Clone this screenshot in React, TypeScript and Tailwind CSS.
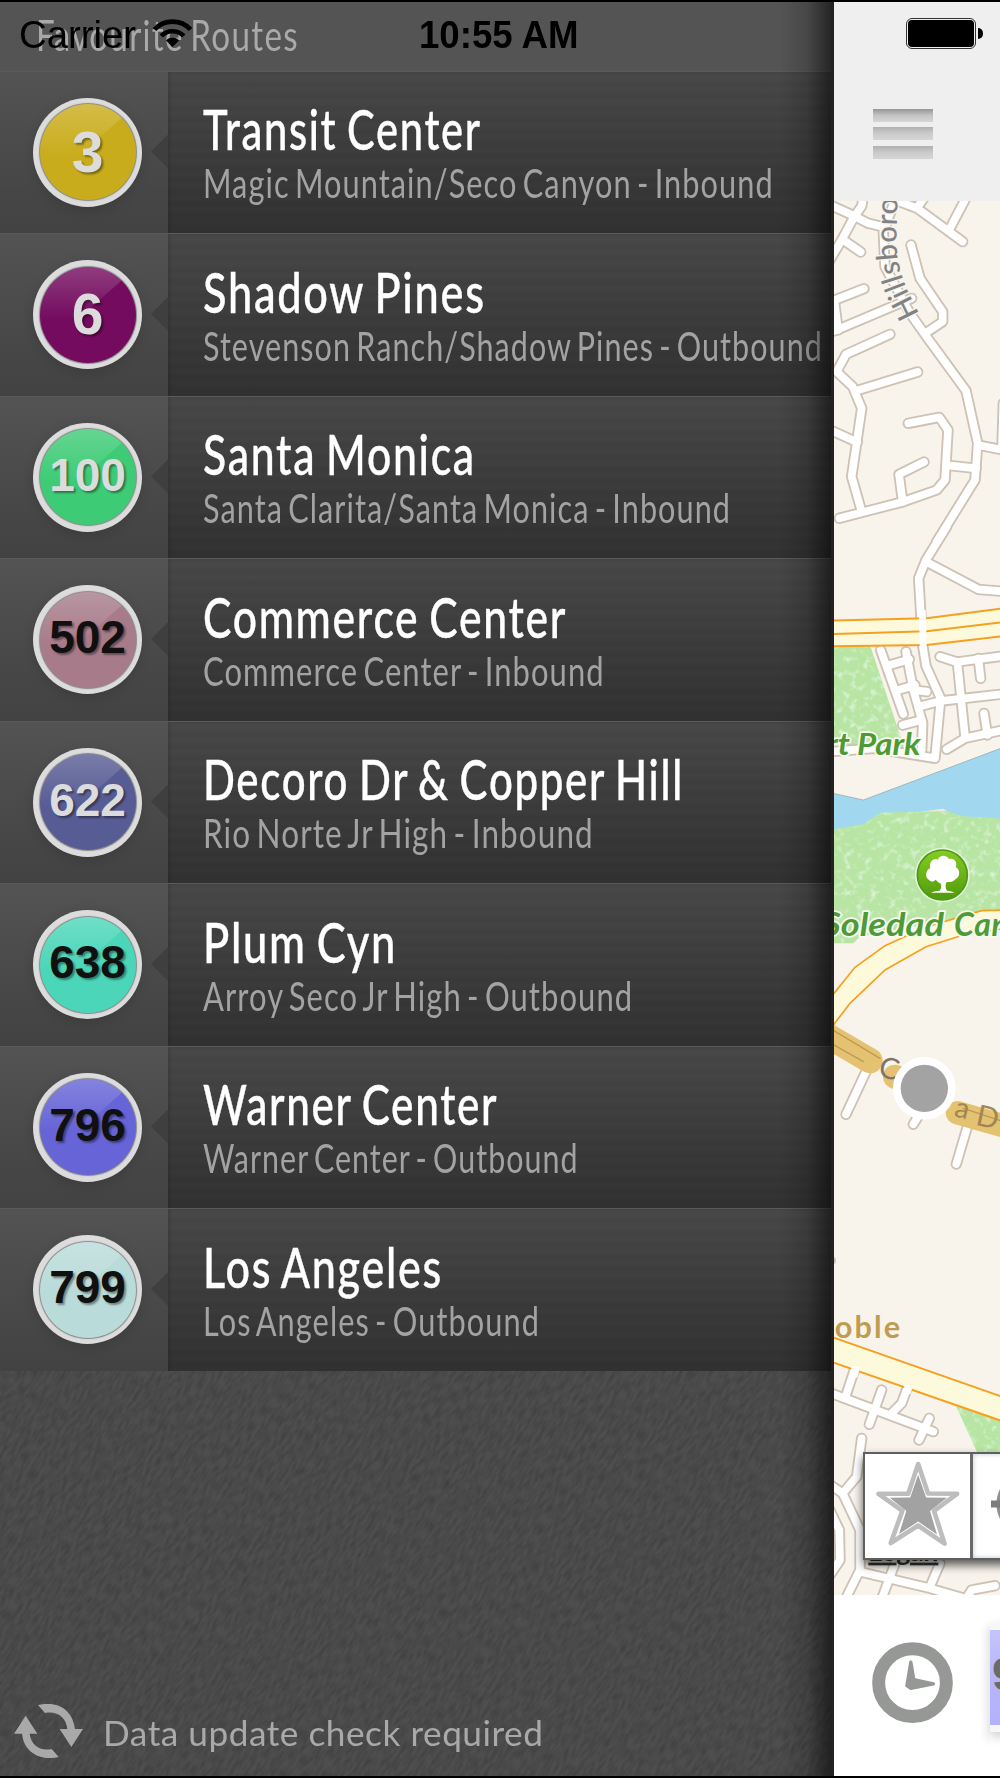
import { useLayoutEffect, useRef, useState } from "react";

type Route = {
  number: string;
  color: string;
  dark?: boolean;
  title: string;
  titleWidth: number;
  detail: string;
  detailWidth: number;
};

const routes: Route[] = [
  { number: "3", color: "#c9ac1b", title: "Transit Center", titleWidth: 279, detail: "Magic Mountain/Seco Canyon - Inbound", detailWidth: 571 },
  { number: "6", color: "#740b5f", title: "Shadow Pines", titleWidth: 283, detail: "Stevenson Ranch/Shadow Pines - Outbound", detailWidth: 620 },
  { number: "100", color: "#3ecb76", title: "Santa Monica", titleWidth: 273, detail: "Santa Clarita/Santa Monica - Inbound", detailWidth: 528 },
  { number: "502", color: "#a87b8b", dark: true, title: "Commerce Center", titleWidth: 364, detail: "Commerce Center - Inbound", detailWidth: 402 },
  { number: "622", color: "#585c94", title: "Decoro Dr & Copper Hill", titleWidth: 481, detail: "Rio Norte Jr High - Inbound", detailWidth: 391 },
  { number: "638", color: "#4bd6ba", dark: true, title: "Plum Cyn", titleWidth: 194, detail: "Arroy Seco Jr High - Outbound", detailWidth: 430 },
  { number: "796", color: "#6664d6", dark: true, title: "Warner Center", titleWidth: 295, detail: "Warner Center - Outbound", detailWidth: 376 },
  { number: "799", color: "#b9dbd9", dark: true, title: "Los Angeles", titleWidth: 240, detail: "Los Angeles - Outbound", detailWidth: 337 },
];

// Condenses a line of text so that it takes exactly `width` pixels
function FitText({ text, width, className }: { text: string; width: number; className: string }) {
  const ref = useRef<HTMLSpanElement>(null);
  const [scale, setScale] = useState(1);

  useLayoutEffect(() => {
    if (ref.current) setScale(width / ref.current.offsetWidth);
  }, [text, width]);

  return (
    <div className={className} style={{ width }}>
      <span ref={ref} className="inline-block origin-left whitespace-nowrap" style={{ transform: `scaleX(${scale})` }}>
        {text}
      </span>
    </div>
  );
}

function Badge({ route }: { route: Route }) {
  return (
    <div className="mt-[26px] ml-[33px] h-[109px] w-[109px] rounded-full bg-[#dcdcdc] p-[6.5px] shadow-[0_3px_12px_rgba(0,0,0,0.14)]">
      <div
        className="relative flex h-full w-full items-center justify-center overflow-hidden rounded-full shadow-[0_0_1px_1px_rgba(70,70,70,0.55)]"
        style={{ backgroundColor: route.color }}
      >
        <div className="absolute inset-0 bg-linear-to-b from-white/20 to-white/0 to-55% [clip-path:polygon(0_0,100%_0,84%_16%,34%_60%,0_78%)]" />
        <span
          className={
            "relative font-['Liberation_Sans',sans-serif] font-bold [text-shadow:2px_2px_2px_rgba(0,0,0,0.4)] " +
            (route.number.length === 1 ? "text-[57px] leading-[57px] " : "-mt-[5px] text-[46px] leading-[46px] ") +
            (route.dark ? "text-[#101010]" : "text-[#dcdcdc]")
          }
        >
          {route.number}
        </span>
      </div>
    </div>
  );
}

function RouteRow({ route }: { route: Route }) {
  return (
    <li className="flex h-[162.5px] border-t border-[#5a5a5a] bg-linear-to-b from-[#494949] to-[#323232]">
      <div className="relative w-[168px] bg-linear-to-b from-[#535353] to-[#424242]">
        <Badge route={route} />
        <div className="absolute top-[63px] right-0 h-[34px] w-[17px] bg-[#3f3f3f] [clip-path:polygon(100%_0,100%_100%,0_50%)]" />
      </div>
      <div className="flex flex-1 flex-col gap-[6px] bg-[repeating-linear-gradient(to_bottom,rgba(0,0,0,0.05)_0px,transparent_6px,rgba(0,0,0,0.05)_12px)] pt-[29.5px] pl-[35px] shadow-[inset_3px_0_3px_-1px_rgba(0,0,0,0.12)]">
        <FitText
          text={route.title}
          width={route.titleWidth}
          className="text-[56px] leading-[56px] font-medium tracking-[0.04em] text-white [-webkit-text-stroke:0.4px_white] [word-spacing:-0.06em]"
        />
        <FitText
          text={route.detail}
          width={route.detailWidth}
          className="text-[40px] leading-[40px] tracking-[0.035em] text-[#a3a3a3] [word-spacing:-0.12em]"
        />
      </div>
    </li>
  );
}

function Leather() {
  return (
    <svg className="absolute inset-0 h-full w-full" aria-hidden="true">
      <filter id="grain" x="0" y="0" width="100%" height="100%">
        <feTurbulence type="fractalNoise" baseFrequency="0.09 0.3" numOctaves="2" seed="4" />
        <feColorMatrix values="0 0 0 0 0  0 0 0 0 0  0 0 0 0 0  0.9 0 0 0 -0.3" />
      </filter>
      <rect width="100%" height="100%" fill="#4e4e4e" />
      <g transform="rotate(-58 416 900)" opacity="0.36">
        <rect x="-800" y="-400" width="2400" height="2600" filter="url(#grain)" />
      </g>
    </svg>
  );
}

function StatusBar() {
  return (
    <div className="absolute top-[2px] left-0 flex h-[66px] w-full items-center pr-[17px] pl-[19px] font-['Liberation_Sans',sans-serif] text-black">
      <FitText text="Carrier" width={117} className="text-[38px] leading-[66px]" />
      <svg className="-mt-[4px] ml-[17px] h-[29px] w-[39px]" viewBox="0 0 39 29">
        <g fill="none" stroke="#000" strokeWidth="4.6">
          <path d="M1.5 10.5 C11 0 28 0 37.5 10.5" />
          <path d="M8.3 17 C14 10.6 25 10.6 30.7 17" />
        </g>
        <path d="M13 21.5 C16.5 17.6 22.5 17.6 26 21.5 L19.5 28 Z" />
      </svg>
      <FitText text="10:55 AM" width={159} className="ml-[227px] text-[38px] leading-[66px] font-bold" />
      <div className="mt-[-3px] ml-auto flex items-center gap-[2px]">
        <div className="h-[31px] w-[70px] rounded-[6px] border-[1.5px] border-[#333] p-px">
          <div className="h-full w-full rounded-[4px] bg-black" />
        </div>
        <div className="h-[11px] w-[5px] rounded-r-full bg-black" />
      </div>
    </div>
  );
}

// Streets, each tile in its own local coordinates (three units to a pixel)
const streets: { y: number; paths: string[] }[] = [
  {
    y: 0,
    paths: [
      "M-10 40 L60 72 L115 100 L165 112 L195 30",
      "M100 20 L95 48 L70 85 L35 150 L0 210",
      "M40 150 L92 186",
      "M195 30 L262 55 L398 155",
      "M285 20 L262 52",
      "M410 20 L360 115",
      "M243 165 L270 265 L338 365 L338 395 L293 425",
      "M160 125 L165 230 L240 370 L293 445 L408 602 L443 760 L435 870 L320 1055",
      "M443 765 L520 780",
      "M516 770 L520 640",
      "M-10 340 L102 296",
      "M-10 430 L20 420 L245 325",
      "M14 340 L24 420",
      "M180 433 L48 493 L20 545 L68 590 L95 655 L65 860 L95 965",
      "M80 602 L263 546",
      "M-10 715 L82 757",
      "M28 985 L220 935 L320 900 L345 870 L354 720 L328 682 L235 700",
      "M218 935 L207 853 L282 816",
      "M354 826 L438 835",
    ],
  },
  {
    y: 1020,
    paths: [
      "M350 -10 L288 90 L266 145 L278 345 L288 408 L332 505 L315 685 L130 655 L0 665",
      "M288 95 L445 178 L520 184",
      "M152 360 L220 552",
      "M228 365 L250 480 L278 580 L275 660",
      "M180 405 L238 388",
      "M205 480 L255 465",
      "M250 480 L290 485",
      "M265 530 L332 513 L520 492",
      "M218 585 L275 570",
      "M330 380 L380 396 L520 378",
      "M382 396 L405 620",
      "M445 385 L452 445",
      "M350 658 L405 625 L520 600",
      "M462 550 L472 615",
    ],
  },
  {
    y: 2010,
    paths: ["M115 620 L48 763", "M285 735 L250 793", "M418 780 L379 912"],
  },
  {
    y: 3030,
    paths: [
      "M-10 575 L310 695",
      "M78 495 L45 595",
      "M155 570 L118 673",
      "M235 555 L215 610 L185 640",
      "M298 655 L267 720",
    ],
  },
  {
    y: 3720,
    paths: [
      "M95 25 L80 140 L38 190 L-20 150",
      "M38 190 L90 300 L90 420 L40 520",
      "M-20 200 L28 300 L30 390 L-10 450",
      "M90 425 L300 475 L420 510",
      "M195 400 L150 520",
      "M330 400 L300 470",
      "M495 467 L425 480 L400 520",
    ],
  },
];

function Streets({ casing }: { casing?: boolean }) {
  return (
    <g
      fill="none"
      stroke={casing ? "#cdc2b5" : "#ffffff"}
      strokeWidth={casing ? 34 : 23}
      strokeLinecap="round"
      strokeLinejoin="round"
    >
      {streets.map((tile) => (
        <g key={tile.y} transform={`translate(0 ${tile.y})`}>
          {tile.paths.map((d) => (
            <path key={d} d={d} />
          ))}
        </g>
      ))}
    </g>
  );
}

function RoadMap() {
  return (
    <svg className="block h-[1394px] w-full shrink-0 bg-[#f8f4ec]" viewBox="12 33 498 4182" preserveAspectRatio="none">
      <defs>
        <filter id="grass" x="0" y="0" width="100%" height="100%">
          <feTurbulence type="fractalNoise" baseFrequency="0.05" numOctaves="2" seed="7" result="n" />
          <feColorMatrix in="n" values="0 0 0 0 0.84  0 0 0 0 0.95  0 0 0 0 0.79  2 0 0 0 -1.05" result="spots" />
          <feComposite in="spots" in2="SourceAlpha" operator="in" result="inside" />
          <feMerge>
            <feMergeNode in="SourceGraphic" />
            <feMergeNode in="inside" />
          </feMerge>
        </filter>
        <linearGradient id="pin" x1="0" y1="0" x2="0" y2="1">
          <stop offset="0" stopColor="#86cc22" />
          <stop offset="1" stopColor="#4f9a0c" />
        </linearGradient>
        <path id="hillsborough" d="M268 372 L238 312 Q202 240 200 160 Q198 90 208 -60" />
      </defs>

      {/* parks and river */}
      <g transform="translate(0 1020)">
        <path d="M0 345 L120 345 L225 660 L0 640 Z" fill="#b8e5a4" filter="url(#grass)" />
        <path d="M0 788 L100 810 L520 652 L520 880 L0 910 Z" fill="#a1d8f0" />
        <path d="M0 788 L100 810 L520 652" fill="none" stroke="#8ca3a8" strokeWidth="2" />
        <path d="M270 845 L340 836 L370 855 Z" fill="#f1e9dc" />
        <path d="M0 900 L102 882 L150 848 L350 843 L398 859 L520 866 L520 1140 L90 1220 L70 1240 L0 1240 Z" fill="#b8e5a4" filter="url(#grass)" />
      </g>
      <path d="M378 3648 L520 3690 L520 3900 L470 3850 Z" fill="#b8e5a4" filter="url(#grass)" />

      <Streets casing />
      <Streets />

      {/* highways */}
      <g transform="translate(0 1020)" fill="none" stroke="#f5a01e" strokeWidth="6">
        <path d="M0 272 L290 265 L520 235 L520 318 L290 345 L0 349 Z" fill="#fdfadb" />
        <path d="M0 312 L290 304 L520 276" />
        <path d="M277 240 L280 370" stroke="#ffffff" strokeWidth="20" />
      </g>
      <g transform="translate(0 2010)" fill="none">
        <path d="M-20 440 L75 322 L165 257 L290 200 L455 152 L530 150 L530 205 L410 222 L288 260 L165 330 L60 430 L-20 535 Z" fill="#fdfadb" />
        <path d="M-20 440 L75 322 L165 257 L290 200 L455 152 L530 150" stroke="#f5a01e" strokeWidth="5" />
        <path d="M530 205 L410 222 L288 260 L165 330 L60 430 L0 508" stroke="#f5a01e" strokeWidth="5" />
      </g>
      <g transform="translate(0 3030)">
        <path d="M0 409 L530 595 L530 668 L0 484 Z" fill="#fdfadb" stroke="#f5a01e" strokeWidth="6" />
        <path d="M78 500 L70 530 M236 556 L230 580" stroke="#ffffff" strokeWidth="24" />
      </g>

      {/* bus line */}
      <g transform="translate(0 2010)" fill="none" strokeLinecap="round" strokeLinejoin="round">
        <path d="M-20 520 L120 602" stroke="#e5c272" strokeWidth="76" />
        <path d="M195 650 L300 700" stroke="#e5c272" strokeWidth="72" />
        <path d="M382 758 L540 803" stroke="#e5c272" strokeWidth="70" />
        <path d="M0 505 L150 595 M0 548 L100 605 M400 745 L520 785" stroke="#bd9a53" strokeWidth="4" />
      </g>

      <g fontFamily="Lato, sans-serif" fontSize="84" fill="#808285" stroke="#f8f4ec" strokeWidth="9" paintOrder="stroke">
        <text fontSize="88" fontWeight="500" letterSpacing="1.5">
          <textPath href="#hillsborough">Hillsboro</textPath>
        </text>
        <g transform="translate(0 2010)" stroke="none" fill="#7d7566">
          <text x="142" y="648" fontSize="88" transform="rotate(14 142 648)">
            C
          </text>
          <text x="370" y="768" fontSize="86" transform="rotate(14 370 768)" fill="#a08752">
            a
          </text>
          <text x="434" y="794" fontSize="88" transform="rotate(12 434 794)" fill="#a08752">
            D
          </text>
          <text x="506" y="812" transform="rotate(14 506 812)" fill="#a08752">
            r
          </text>
        </g>
      </g>

      {/* stop marker */}
      <circle cx="283" cy="2695" r="94" fill="#ffffff" />
      <circle cx="283" cy="2695" r="71" fill="#a3a3a3" />

      {/* park pin */}
      <g transform="translate(337 2055)">
        <circle r="82" fill="#e9f6df" />
        <circle r="75" fill="url(#pin)" stroke="#4c9a14" strokeWidth="5" />
        <path
          d="M-40 15 C-54 8 -50 -16 -36 -20 C-42 -42 -22 -52 -14 -46 C-6 -64 16 -58 20 -48 C38 -52 46 -36 40 -24 C56 -16 52 8 40 12 C30 24 18 20 12 22 C8 32 10 42 14 47 C24 48 32 50 36 53 L-34 53 C-28 49 -20 48 -8 47 C-2 40 -2 32 -6 24 C-14 24 -18 14 -20 14 C-28 22 -36 20 -40 15 Z"
          fill="#ffffff"
        />
      </g>

      <g
        fontFamily="Lato, sans-serif"
        fontWeight="700"
        fontStyle="italic"
        fill="#4f9a35"
        stroke="#f7fbf2"
        strokeWidth="10"
        paintOrder="stroke"
        strokeLinejoin="round"
      >
        <text x="-12" y="1694" fontSize="94" textLength="284" lengthAdjust="spacingAndGlyphs">
          rt Park
        </text>
        <text x="-24" y="2237" fontSize="96" textLength="366" lengthAdjust="spacingAndGlyphs">
          Soledad
        </text>
        <text x="372" y="2237" fontSize="96" letterSpacing="2">
          Canyon
        </text>
      </g>
      <text x="14" y="3445" fontFamily="Lato, sans-serif" fontWeight="700" fontSize="92" fill="#bf9c50" textLength="196">
        oble
      </text>
      <circle cx="6" cy="3212" r="12" fill="#cdc2b5" />
      <text x="115" y="4112" fontFamily="Lato, sans-serif" fontWeight="700" fontSize="80" fill="#333" textLength="210" textDecoration="underline">
        Logan
      </text>
    </svg>
  );
}

function HamburgerButton() {
  return (
    <div className="flex w-[60px] flex-col gap-[5.5px]">
      <div className="h-[13px] bg-linear-to-b from-[#969696] via-[#c4c4c4] to-[#d6d6d6]" />
      <div className="h-[13px] bg-linear-to-b from-[#b0b0b0] via-[#cacaca] to-[#d6d6d6]" />
      <div className="h-[13px] bg-linear-to-b from-[#b0b0b0] via-[#cacaca] to-[#d6d6d6]" />
    </div>
  );
}

function MapButtons() {
  return (
    <div className="absolute top-[1450px] left-[29px] flex h-[108px] w-[220px] border-[2px] border-[#5f5f5f] bg-white shadow-[0_5px_9px_rgba(0,0,0,0.65)]">
      <div className="w-[108px] border-r-[3px] border-[#6a6a6a]">
        <svg className="h-full w-full" viewBox="74 42 318 312">
          <path
            d="M235 71 L265 160 L353 161 L283 213 L315 312 L235 257 L152 310 L187 213 L115 161 L205 161 Z"
            fill="#ffffff"
            stroke="#bdbdbd"
            strokeWidth="14"
            strokeLinejoin="round"
          />
          <path d="M235 103 L259 172 L322 173 L271 213 L292 284 L235 245 L177 283 L199 213 L149 173 L211 172 Z" fill="#a2a2a2" />
        </svg>
      </div>
      <svg className="h-full w-[106px] shadow-[inset_0_0_5px_#bcc8cf]" viewBox="0 0 106 104">
        <circle cx="56" cy="50" r="29" fill="none" stroke="#8f8f8f" strokeWidth="7" />
        <path d="M18 50 H42 M94 50 H70 M56 12 V36 M56 88 V64" stroke="#7d7d7d" strokeWidth="7" />
      </svg>
    </div>
  );
}

function BottomBar() {
  return (
    <div className="flex h-[181px] shrink-0 items-center overflow-hidden bg-white pl-[38px]">
      <svg className="-mt-[7px] h-[81px] w-[81px] shrink-0" viewBox="126 637 244 243">
        <circle cx="248" cy="759" r="102" fill="none" stroke="#969896" strokeWidth="39" />
        <path
          d="M243 697 L252 750 L311 763 L243 776 L231 768 Z"
          fill="#969896"
          stroke="#969896"
          strokeWidth="10"
          strokeLinejoin="round"
        />
      </svg>
      <div className="ml-[27px] h-[125px] w-[10px] shrink-0 bg-linear-to-r from-white to-[#e9e9e9] [mask-image:linear-gradient(transparent,black_30%,black_70%,transparent)]" />
      <div className="-mt-[16px] h-[109px] w-[120px] shrink-0 border-y-[7px] border-[#f7f7f7] bg-linear-to-b from-[#c5c5fb] via-[#b6b5fb] to-[#b3b1fa] pt-[21px] pl-[2px] shadow-[0_4px_10px_rgba(0,0,0,0.2)]">
        <span className="block font-['Liberation_Sans',sans-serif] text-[46px] leading-[46px] font-bold text-[#6a6a6a]">
          9
        </span>
      </div>
    </div>
  );
}

export default function App() {
  return (
    <div className="relative flex h-[1778px] w-[1000px] overflow-hidden bg-black py-[2px] font-['Lato',sans-serif]">
      <aside className="relative flex w-[834px] shrink-0 flex-col overflow-hidden bg-[#484848]">
        <Leather />
        <header className="relative h-[68.5px] bg-[#545454] pt-[8px] pl-[36px]">
          <FitText
            text="Favourite Routes"
            width={263}
            className="text-[42px] leading-[50px] tracking-[0.04em] text-[#a9a9a9] [word-spacing:-0.1em]"
          />
        </header>
        <ul className="relative">
          {routes.map((route) => (
            <RouteRow key={route.number} route={route} />
          ))}
        </ul>
        <footer className="relative mt-auto mb-[18.5px] flex items-center gap-[20px] pl-[14px]">
          <svg className="h-[54px] w-[69px]" viewBox="42 42 207 162" fill="#a9a9a9">
            <path d="M114 45 C165 33 217 52 225 117 L249 117 L214 171 L179 117 L202 117 C199 83 172 62 135 69 Z" />
            <path d="M176 201 C125 213 72 190 66 131 L42 131 L77 77 L112 131 L89 131 C92 163 120 185 155 177 Z" />
          </svg>
          <FitText
            text="Data update check required"
            width={440}
            className="mt-[5px] text-[34px] leading-[40px] tracking-[0.015em] text-[#a9a9a9]"
          />
        </footer>
        <div className="absolute inset-y-0 right-0 w-[54px] bg-linear-to-r from-transparent via-black/15 to-black/60" />
        <div className="absolute inset-y-0 right-0 w-[3px] bg-[#242220]" />
      </aside>

      <main className="relative flex flex-1 flex-col overflow-hidden">
        <header className="h-[199px] shrink-0 bg-[#efefef] pt-[106.5px] pl-[38.5px]">
          <HamburgerButton />
        </header>
        <RoadMap />
        <MapButtons />
        <BottomBar />
      </main>

      <StatusBar />
    </div>
  );
}
